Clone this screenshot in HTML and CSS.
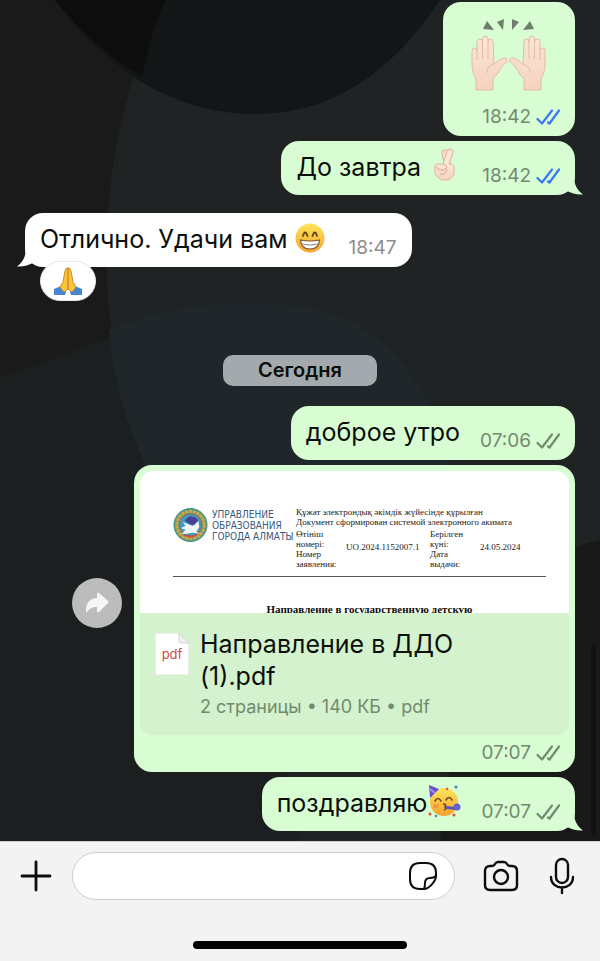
FILE: index.html
```
<!DOCTYPE html>
<html lang="ru">
<head>
    <meta charset="UTF-8">
    <meta name="viewport" content="width=device-width, initial-scale=1.0">
    <title>Чат</title>
    <link rel="stylesheet" href="styles.css">
</head>
<body>
    <svg class="sprite" width="0" height="0" aria-hidden="true">
        <defs>
            <linearGradient id="face" x1="0" y1="0" x2="0" y2="1">
                <stop offset="0" stop-color="#ffe45c"/>
                <stop offset="1" stop-color="#f5a32c"/>
            </linearGradient>
            <linearGradient id="skin" x1="0" y1="0" x2="0" y2="1">
                <stop offset="0" stop-color="#fbe6d8"/>
                <stop offset="1" stop-color="#f5d2bf"/>
            </linearGradient>
        </defs>
        <symbol id="checks" viewBox="0 0 24 18">
            <path d="M1.500 11 L6 15.500 L16 2.500 M12 14.500 L13.500 15.500 L23 2.500" fill="none" stroke="currentColor" stroke-width="2.200" stroke-linecap="round" stroke-linejoin="round"/>
        </symbol>
        <symbol id="tail" viewBox="0 0 22 30">
            <path d="M12 0 V10 C12 20 15 25 21 29.500 C15 30 9 28 5 26 L0 22 V0 Z" fill="currentColor"/>
        </symbol>
        <symbol id="hand" viewBox="0 0 37 56">
            <path d="M5 55 V44 C1 38 1 31 1 25 V16 Q1 13 3.500 13 Q6 13 6 16 V7 Q6 4 8.500 4 Q11.500 4 11.500 7 V4 Q11.500 1 14 1 Q17 1 17 4 V7 Q17 4 19.500 4 Q22 4 22 7 L23 29 C25 28 28 24 33 23 Q37 23 36 27 C32 29 30 33 27 38 Q24 42 22 44 V55 Z" fill="url(#skin)" stroke="#e3bba6" stroke-width="1"/>
            <path d="M6 16 V25 M11.500 7 V24 M17 7 V24 M16 38 Q16 31 23 29" fill="none" stroke="#e3bba6" stroke-width="1"/>
        </symbol>
    </svg>

    <main class="chat">
        <svg class="wallpaper" viewBox="0 0 600 841" preserveAspectRatio="none" aria-hidden="true">
            <rect width="600" height="841" fill="#1f2324"/>
            <path d="M0 0 H165 C92 140 88 340 150 465 L240 580 H0 Z" fill="#1a1a1a"/>
            <path d="M0 378 Q130 330 190 310 L250 560 L300 841 H0 Z" fill="#1b1f20"/>
            <path d="M109 330 Q170 303 255 303 C350 303 395 340 430 405 L460 500 H165 Q116 420 109 330 Z" fill="#20272b"/>
            <path d="M600 540 Q520 560 470 620 L440 841 H600 Z" fill="#191919"/>
            <path d="M55 0 Q140 114 255 114 Q365 114 440 0 Z" fill="#131617"/>
            <path d="M55 0 H165 Q150 35 142 76 Q95 50 55 0 Z" fill="#0d0d0d"/>
        </svg>

        <div class="row out">
            <div class="bubble sticker">
                <svg class="emoji-hands" viewBox="0 0 80 74" role="img" aria-label="Поднятые руки">
                    <g fill="#6f7d6c">
                        <path d="M14 11 L18 3 L25 12 Z"/>
                        <path d="M28 4 L35 1 L34 12 Z"/>
                        <path d="M43 1 L50 4 L43 12 Z"/>
                        <path d="M54 12 L61 3 L65 11 Z"/>
                    </g>
                    <use href="#hand" x="2" y="17" width="37" height="56"/>
                    <use href="#hand" x="2" y="17" width="37" height="56" transform="matrix(-1 0 0 1 79 0)"/>
                </svg>
                <div class="meta"><time>18:42</time><svg class="checks read"><use href="#checks"/></svg></div>
            </div>
        </div>

        <div class="row out">
            <div class="bubble">
                <p class="text">До завтра
                    <svg class="emoji fingers" viewBox="0 0 24 34" role="img" aria-label="Скрещённые пальцы">
                        <path d="M15 19 L12 5" stroke="#dfb49f" stroke-width="7" stroke-linecap="round"/>
                        <path d="M15 19 L12 5" stroke="#f9dfd0" stroke-width="5" stroke-linecap="round"/>
                        <path d="M12 19 L17 4" stroke="#dfb49f" stroke-width="7" stroke-linecap="round"/>
                        <path d="M12 19 L17 4" stroke="#fbe6d8" stroke-width="5" stroke-linecap="round"/>
                        <path d="M2 23 C1 17 3 15 6 16 H18 Q22 17 21 22 C22 28 18 32 12 32 C6 32 2 28 2 23 Z" fill="url(#skin)" stroke="#dfb49f" stroke-width="1"/>
                        <path d="M11 17 L13 13 L17 17 V19 H10 Z" fill="#fbe6d8"/>
                        <path d="M3 19 Q7 24 12 21 Q16 18 11 17 M7 26 Q12 28 14 21" fill="none" stroke="#d3a08b" stroke-width="1"/>
                    </svg>
                </p>
                <div class="meta"><time>18:42</time><svg class="checks read"><use href="#checks"/></svg></div>
                <svg class="tail"><use href="#tail"/></svg>
            </div>
        </div>

        <div class="row in">
            <div class="bubble">
                <p class="text">Отлично. Удачи вам
                    <svg class="emoji" viewBox="0 0 30 30" role="img" aria-label="Улыбка">
                        <circle cx="15" cy="15" r="14.500" fill="url(#face)"/>
                        <path d="M8 13 Q10 6 12.500 13 M17.500 13 Q20 6 22 13" fill="none" stroke="#69421a" stroke-width="1.800" stroke-linecap="round"/>
                        <path d="M5.500 17 Q15 19 24.500 17 Q24 26 15 26 Q6 26 5.500 17 Z" fill="#fff" stroke="#7a5427" stroke-width="1.200"/>
                        <path d="M6.500 21 Q15 23 23.500 21" fill="none" stroke="#8d8377" stroke-width="1"/>
                    </svg>
                </p>
                <div class="meta"><time>18:47</time></div>
                <svg class="tail"><use href="#tail"/></svg>
                <button class="reaction" type="button" aria-label="Реакция: спасибо">
                    <svg viewBox="0 0 28 28" width="28" height="28">
                        <path d="M0 22 L7 19 L12 25 L11 28 H0 Z M28 22 L21 19 L16 25 L17 28 H28 Z" fill="#4685d3"/>
                        <path d="M14 1 Q12 0 11 4 L9 15 L6 20 L10 25 L14 22 L18 25 L22 20 L19 15 L17 4 Q16 0 14 1 Z" fill="#f9c53b" stroke="#d58b20" stroke-width="1"/>
                        <path d="M14 1 V22" stroke="#b9711b" stroke-width="1"/>
                    </svg>
                </button>
            </div>
        </div>

        <div class="date">Сегодня</div>

        <div class="row out">
            <div class="bubble">
                <p class="text">доброе утро</p>
                <div class="meta"><time>07:06</time><svg class="checks"><use href="#checks"/></svg></div>
            </div>
        </div>

        <div class="row out">
            <button class="forward" type="button" aria-label="Переслать">
                <svg viewBox="0 0 24 22" width="24" height="22">
                    <path d="M12 1 Q13 0 14 1 L23 9 Q24 10 23 11 L14 20 Q12 21 12 19 V15 C7 15 4 17 2 20 Q1 21 1 19 C1 11 5 6 12 6 Z" fill="#f6f6f6"/>
                </svg>
            </button>
            <div class="bubble document">
                <div class="preview">
                    <div class="letterhead">
                        <svg class="emblem" viewBox="0 0 36 36" aria-hidden="true">
                            <circle cx="18" cy="18" r="17" fill="#5f9d7c" stroke="#3e8b83" stroke-width="1"/>
                            <circle cx="18" cy="18" r="14" fill="none" stroke="#d9a53c" stroke-width="3" stroke-dasharray="3 1"/>
                            <circle cx="18" cy="18" r="11.500" fill="#3d9dc6" stroke="#b35a3c" stroke-width="1"/>
                            <path d="M8 21 L13 19 L10 15 L15 17 L20 19 L26 14 L27 20 L24 25 L28 27 L20 26 L14 27 L9 27 L13 23 Z" fill="#f5f5f2"/>
                            <path d="M12 13 L17 9 L23 10 L26 13 L22 18 L17 17 Z" fill="#4b3f93"/>
                            <path d="M11 28 Q18 32 25 28" fill="none" stroke="#ca5440" stroke-width="2"/>
                        </svg>
                        <div class="office">УПРАВЛЕНИЕ<br>ОБРАЗОВАНИЯ<br>ГОРОДА АЛМАТЫ</div>
                        <div class="details">
                            <div>Құжат электрондық әкімдік жүйесінде құрылған</div>
                            <div>Документ сформирован системой электронного акимата</div>
                            <table>
                                <tr>
                                    <th>Өтініш<br>номері:<br>Номер<br>заявления:</th>
                                    <td class="number">UO.2024.1152007.1</td>
                                    <th>Берілген<br>күні:<br>Дата<br>выдачи:</th>
                                    <td>24.05.2024</td>
                                </tr>
                            </table>
                        </div>
                    </div>
                    <div class="heading">Направление в государственную детскую</div>
                </div>
                <div class="file">
                    <div class="file-icon">
                        <svg viewBox="0 0 34 42" width="34" height="42" aria-hidden="true">
                            <path d="M0 0 H24 L34 10 V42 H0 Z" fill="#fff" stroke="#d9e3d6" stroke-width="1"/>
                            <path d="M24 0 V8 Q24 10 26 10 H34 Z" fill="#eff0ef" stroke="#d0d5ce" stroke-width="1"/>
                        </svg>
                        <span>pdf</span>
                    </div>
                    <div>
                        <div class="file-name">Направление в ДДО (1).pdf</div>
                        <div class="file-info">2 страницы • 140 КБ • pdf</div>
                    </div>
                </div>
                <div class="meta"><time>07:07</time><svg class="checks"><use href="#checks"/></svg></div>
            </div>
        </div>

        <div class="row out">
            <div class="bubble">
                <p class="text">поздравляю<svg class="emoji party" viewBox="0 0 34 34" role="img" aria-label="Праздник">
                        <circle cx="17" cy="18" r="14" fill="url(#face)"/>
                        <path d="M2 1 L12 5 L3 14 Z" fill="#6450c9"/>
                        <path d="M3 5 L8 9" stroke="#a78df0" stroke-width="2"/>
                        <path d="M8 17 Q11 12 14 17 M19 16 Q22 11 25 16" fill="none" stroke="#6d431c" stroke-width="1.500" stroke-linecap="round"/>
                        <path d="M16 20 Q20 20 18 23 Q20 25 17 26" fill="none" stroke="#7a3c1c" stroke-width="1.500"/>
                        <path d="M19 22 L29 23 L30 26 L19 25 Z" fill="#5a55ba"/>
                        <circle cx="30" cy="23" r="3.500" fill="#6560cd"/>
                        <ellipse cx="9" cy="22" rx="3" ry="2" fill="#f17f3b" opacity=".6"/>
                        <circle cx="29" cy="3" r="1.500" fill="#4c77cf"/>
                        <circle cx="20" cy="5" r="1.200" fill="#d9503f"/>
                        <circle cx="3" cy="30" r="1.500" fill="#d9503f"/>
                        <circle cx="27" cy="31" r="1.500" fill="#d9503f"/>
                        <circle cx="9" cy="32" r="1.200" fill="#4c77cf"/>
                    </svg></p>
                <div class="meta"><time>07:07</time><svg class="checks"><use href="#checks"/></svg></div>
                <svg class="tail"><use href="#tail"/></svg>
            </div>
        </div>

        <div class="scrollbar"></div>
    </main>

    <footer class="composer">
        <div class="controls">
            <button class="icon" type="button" aria-label="Прикрепить">
                <svg viewBox="0 0 32 32" width="32" height="32" stroke-width="2.800"><path d="M16 2 V30 M2 16 H30"/></svg>
            </button>
            <div class="field">
                <input type="text" aria-label="Сообщение">
                <button class="icon" type="button" aria-label="Стикеры">
                    <svg viewBox="0 0 30 30" width="30" height="30" stroke-width="2">
                        <path d="M16 28 H12 Q2 28 2 18 V12 Q2 2 12 2 H18 Q28 2 28 12 V15 C28 20 21 28 16 28 Z"/>
                        <path d="M16 28 Q17 26 17 22 Q17 17 22 17 Q26 17 28 15"/>
                    </svg>
                </button>
            </div>
            <button class="icon" type="button" aria-label="Камера">
                <svg viewBox="0 0 36 32" width="36" height="32" stroke-width="2.400">
                    <path d="M7 6 H9 Q11 6 12 4 Q13 2 15 2 H21 Q23 2 24 4 Q25 6 27 6 H29 Q34 6 34 11 V25 Q34 30 29 30 H7 Q2 30 2 25 V11 Q2 6 7 6 Z"/>
                    <circle cx="18" cy="17" r="7"/>
                </svg>
            </button>
            <button class="icon mic" type="button" aria-label="Голосовое сообщение">
                <svg viewBox="0 0 26 38" width="26" height="38" stroke-width="2.400">
                    <rect x="7" y="2" width="12" height="24" rx="6"/>
                    <path d="M2 20 C2 34 24 34 24 20 M13 31 V36"/>
                </svg>
            </button>
        </div>
        <div class="home-bar"></div>
    </footer>
</body>
</html>
```

FILE: styles.css
```
* {
    box-sizing: border-box;
}

body {
    margin: 0;
    min-height: 100vh;
    display: flex;
    flex-direction: column;
    font-family: Inter, "Liberation Sans", sans-serif;
    color: #0b0f0b;
    background-color: #f3f3f3;
}

button {
    border: none;
    padding: 0;
    background: none;
    cursor: pointer;
}

.sprite {
    position: absolute;
}

/* messages */
.chat {
    position: relative;
    flex: 1;
    display: flex;
    flex-direction: column;
    gap: 5px;
    padding: 2px 25px 10px;
    background-color: #1f2324;
    overflow: hidden;
}

.wallpaper {
    position: absolute;
    top: 0;
    left: 0;
    width: 100%;
    height: 100%;
}

.row {
    position: relative;
    display: flex;
    align-items: center;
}

.out {
    justify-content: flex-end;
}

.bubble {
    position: relative;
    display: flex;
    align-items: flex-end;
    gap: 20px;
    min-height: 54px;
    padding: 0 15px;
    border-radius: 18px;
    color: #0b0f0b;
    background-color: #d9fdd3;
}

.in {
    margin: 13px 0 83px;
}

.in .bubble {
    gap: 24px;
    background-color: #fff;
}

.text {
    margin: 0;
    font-size: 25px;
    line-height: 52px;
    height: 54px;
    white-space: nowrap;
}

.emoji {
    width: 30px;
    height: 30px;
    vertical-align: -5px;
}

.fingers {
    width: 24px;
    height: 34px;
    margin: 0 5px;
    vertical-align: -6px;
}

.party {
    width: 34px;
    height: 34px;
    vertical-align: -6px;
}

.meta {
    display: flex;
    align-items: center;
    justify-content: flex-end;
    gap: 5px;
    padding-bottom: 8px;
    font-size: 19px;
    line-height: 22px;
    color: #728a6f;
}

.in .meta {
    color: #8d8d8d;
}

.checks {
    width: 24px;
    height: 18px;
}

.read {
    color: #3b78f0;
}

.tail {
    position: absolute;
    right: -9px;
    bottom: 0;
    width: 22px;
    height: 30px;
    color: #d9fdd3;
}

.in .tail {
    right: auto;
    left: -9px;
    color: #fff;
    transform: scaleX(-1);
}

.sticker {
    flex-direction: column;
    gap: 14px;
    padding-top: 16px;
}

.emoji-hands {
    width: 80px;
    height: 74px;
    margin: 0 11px;
}

.reaction {
    position: absolute;
    left: 15px;
    top: 48px;
    width: 56px;
    height: 40px;
    display: flex;
    align-items: center;
    justify-content: center;
    border: 1px solid #e8e8e5;
    border-radius: 20px;
    background-color: #fff;
}

.date {
    position: relative;
    align-self: center;
    margin-bottom: 15px;
    padding: 0 35px;
    border-radius: 10px;
    font-size: 20px;
    font-weight: 600;
    line-height: 31px;
    background-color: #a3a9ac;
}

/* document message */
.forward {
    display: flex;
    align-items: center;
    justify-content: center;
    width: 50px;
    height: 50px;
    margin: 0 12px 32px 0;
    border-radius: 50%;
    background-color: #bcbcbc;
}

.document {
    display: block;
    width: 441px;
    padding: 6px;
}

.preview {
    height: 142px;
    padding: 36px 23px 0 33px;
    border-radius: 13px 13px 0 0;
    background-color: #fff;
    overflow: hidden;
}

.letterhead {
    display: flex;
    height: 70px;
    border-bottom: 1px solid #555;
}

.emblem {
    width: 35px;
    height: 36px;
    flex: none;
}

.office {
    width: 84px;
    margin: 2px 0 0 4px;
    font-family: "DejaVu Sans Condensed", "Liberation Sans", sans-serif;
    font-size: 10px;
    line-height: 11px;
    color: #35597c;
    white-space: nowrap;
}

.details {
    font-family: "Liberation Serif", serif;
    font-size: 9px;
    line-height: 10px;
    color: #222;
    white-space: nowrap;
}

.details table {
    margin-top: 2px;
    border-collapse: collapse;
}

.details th,
.details td {
    padding: 0;
    font-weight: normal;
    text-align: left;
}

.details td {
    padding-bottom: 4px;
}

.details th {
    width: 50px;
}

.details .number {
    width: 84px;
}

.heading {
    margin: 25px 0 0 20px;
    font-family: "Liberation Serif", serif;
    font-size: 11px;
    font-weight: bold;
    line-height: 14px;
    text-align: center;
    white-space: nowrap;
}

.file {
    display: flex;
    gap: 11px;
    height: 122px;
    padding: 15px;
    border-radius: 0 0 13px 13px;
    background-color: #d3f2cd;
}

.file-icon {
    display: grid;
    place-items: center;
    width: 34px;
    height: 52px;
}

.file-icon svg,
.file-icon span {
    grid-area: 1 / 1;
}

.file-icon span {
    font-size: 13px;
    color: #c94b42;
}

.file-name {
    max-width: 300px;
    font-size: 25px;
    line-height: 32px;
}

.file-info {
    margin-top: 4px;
    font-size: 18px;
    line-height: 22px;
    color: #728a6f;
}

.document .meta {
    padding: 7px 9px 2px;
}

.scrollbar {
    position: absolute;
    right: 4px;
    bottom: 6px;
    width: 5px;
    height: 190px;
    border-radius: 3px;
    background-color: #111;
}

/* input panel */
.composer {
    display: flex;
    flex-direction: column;
    height: 120px;
    padding: 10px 0 12px;
    border-top: 1px solid #d0d0d0;
    background-color: #f3f3f3;
}

.controls {
    display: flex;
    align-items: center;
    padding: 0 25px 0 20px;
}

.field {
    flex: 1;
    min-width: 0;
    display: flex;
    align-items: center;
    height: 48px;
    margin: 0 28px 0 20px;
    padding: 0 16px 0 20px;
    border: 1px solid #cfcfcf;
    border-radius: 24px;
    background-color: #fff;
}

.field input {
    flex: 1;
    min-width: 0;
    border: none;
    outline: none;
    font-family: inherit;
    font-size: 25px;
    background: none;
}

.icon {
    display: flex;
    flex: none;
}

.icon svg {
    fill: none;
    stroke: #0c0c0c;
    stroke-linecap: round;
    stroke-linejoin: round;
}

.mic {
    margin-left: 30px;
}

.home-bar {
    align-self: center;
    width: 214px;
    height: 8px;
    margin-top: auto;
    border-radius: 4px;
    background-color: #000;
}
```
